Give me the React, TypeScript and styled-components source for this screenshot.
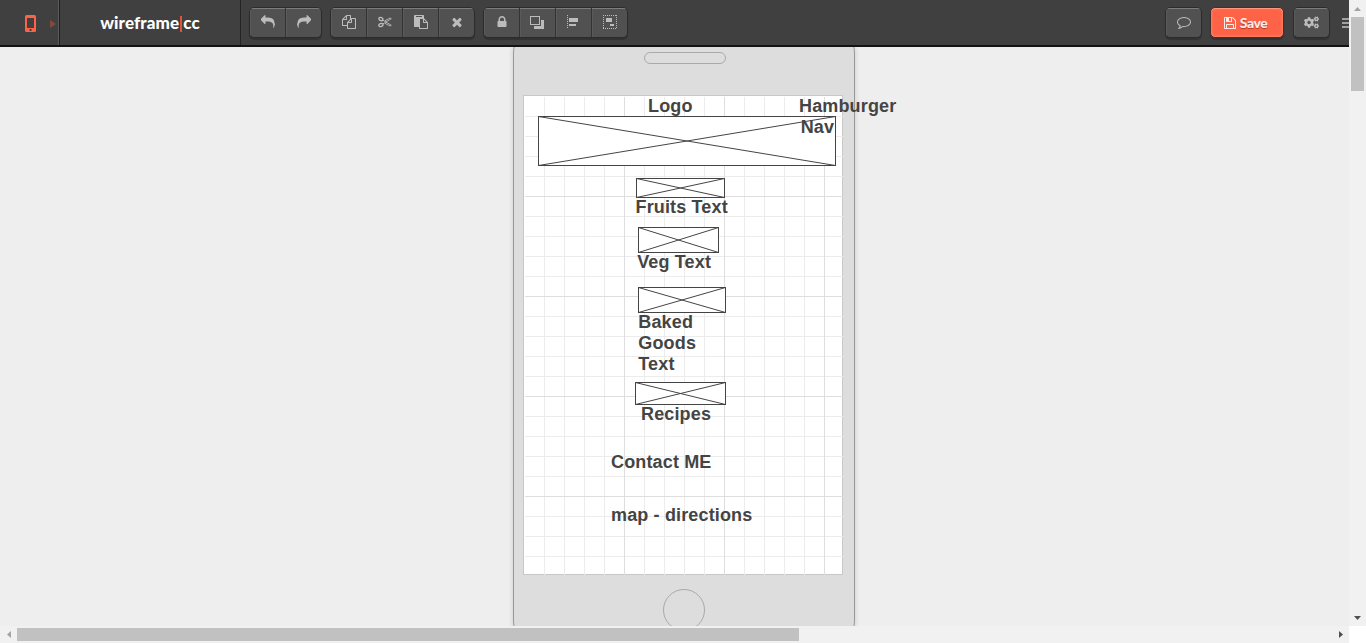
import React from "react";
import styled, { createGlobalStyle, css } from "styled-components";
import { FaCogs } from "react-icons/fa";

const GlobalStyle = createGlobalStyle`
  *, *::before, *::after { box-sizing: border-box; }
  html, body { margin: 0; padding: 0; background: #eee; overflow: hidden; }
  body { font-family: Lato, "Liberation Sans", sans-serif; }
`;

const Window = styled.div`
  display: grid;
  grid-template: 626px 17px / 1349px 17px;
  width: 1366px;
  height: 643px;
  overflow: hidden;
`;

const Page = styled.div`
  display: flex;
  flex-direction: column;
  overflow: hidden;
  background: #eee;
`;

/* ---------- top bar ---------- */

const TopBar = styled.header`
  position: relative;
  z-index: 2;
  display: flex;
  flex: none;
  width: 1349px;
  height: 47px;
  overflow: hidden;
  background: #404040;
  border-bottom: 2px solid #141212;
`;

const DevicePicker = styled.div`
  display: flex;
  align-items: center;
  gap: 14px;
  width: 60px;
  flex: none;
  padding: 2px 0 0 25px;
  border-right: 1px solid #1f1f1f;
  box-shadow: inset -1px 0 #5b5b5b;
`;

const Expand = styled.span`
  border: solid transparent;
  border-width: 4px 0 4px 6px;
  border-left-color: #84483d;
`;

const Brand = styled.div`
  display: flex;
  align-items: center;
  justify-content: center;
  width: 181px;
  flex: none;
  border-right: 1px solid #242424;
  color: #fff;
  font-size: 17px;
  font-weight: 900;
  line-height: 45px;
  letter-spacing: 0.13px;
`;

const BrandBar = styled.span`
  width: 2px;
  height: 16px;
  margin: 3px 1px 0 1px;
  background: #d9553f;
`;

const Tools = styled.div`
  display: flex;
  gap: 8px;
  padding: 7px 0 0 8px;
  flex: none;
`;

const raised = css`
  height: 31px;
  border: 1px solid #2c2c2c;
  border-radius: 5px;
  box-shadow: 0 2px 1px rgba(0, 0, 0, 0.22);
`;

const ButtonGroup = styled.div`
  ${raised}
  display: flex;
  overflow: hidden;
  background: #515151;
`;

const ToolButton = styled.button<{ $nudge?: boolean }>`
  display: flex;
  align-items: center;
  justify-content: center;
  width: 35px;
  height: 29px;
  padding: 0 ${(p) => (p.$nudge ? 1 : 0)}px 1px 0;
  border: 0;
  background: transparent;
  color: #bcbcbc;
  box-shadow: inset 0 1px #7d7d7d, inset 1px 0 #5a5a5a;

  & + & {
    width: 36px;
    border-left: 1px solid #333;
  }
`;

const SideActions = styled.div`
  display: flex;
  align-items: flex-start;
  margin-left: auto;
  padding-top: 7px;
  flex: none;
`;

const SaveButton = styled.button`
  ${raised}
  display: flex;
  align-items: center;
  justify-content: center;
  gap: 3px;
  width: 74px;
  margin: 0 9px 0 8px;
  padding: 0 4px 0 0;
  border-color: #43302c;
  background: #ff6347;
  box-shadow: inset 0 1px #ff9480, inset 0 0 3px #ff9b86, 0 2px 1px rgba(0, 0, 0, 0.22);
  color: #ffe9e4;
  font: 900 14px/20px Lato, sans-serif;
  letter-spacing: -0.5px;
  text-shadow: 0 1px 1px rgba(120, 30, 10, 0.6);
`;

const MenuLines = styled.div`
  display: flex;
  flex-direction: column;
  gap: 2px;
  width: 7px;
  margin: 11px 0 0 12px;
`;

const MenuLine = styled.span`
  height: 2px;
  background: #a2a2a2;
`;

/* ---------- canvas ---------- */

const Workspace = styled.main`
  flex: 1;
  min-height: 0;
  padding-left: 513px;
`;

const Phone = styled.div`
  display: flex;
  flex-direction: column;
  align-items: center;
  width: 342px;
  height: 616px;
  margin-top: -18px;
  padding-top: 22px;
  border: 1px solid #999;
  border-radius: 24px;
  background: #ddd;
  box-shadow: 0 0 5px rgba(0, 0, 0, 0.16);
`;

const Speaker = styled.div`
  width: 82px;
  height: 12px;
  margin-left: 2px;
  border: 1px solid #aaa;
  border-radius: 6px;
  flex: none;
`;

const Screen = styled.div`
  position: relative;
  flex: none;
  width: 320px;
  height: 480px;
  margin: 31px 2px 14px 0;
  border: 1px solid #c8c8c8;
  background: #fff;
`;

const Grid = styled.div`
  height: 478px;
  margin: 1px -1px -1px 1px;
  background-image:
    linear-gradient(to right, transparent 99px, #dedede 99px),
    linear-gradient(to bottom, transparent 99px, #dedede 99px),
    linear-gradient(to right, transparent 19px, #ececec 19px),
    linear-gradient(to bottom, transparent 19px, #ececec 19px);
  background-size: 100px 100px, 100px 100px, 20px 20px, 20px 20px;
`;

const HomeButton = styled.div`
  width: 42px;
  height: 42px;
  flex: none;
  border: 1px solid #aaa;
  border-radius: 50%;
`;

type Box = { x: number; y: number; w: number; h: number };

const Placeholder = styled.svg<{ $x: number; $y: number }>`
  position: absolute;
  left: ${(p) => p.$x}px;
  top: ${(p) => p.$y}px;
  fill: #fff;
  stroke: #444;
`;

const Label = styled.div<{ $x: number; $y: number }>`
  position: absolute;
  left: ${(p) => p.$x}px;
  top: ${(p) => p.$y}px;
  color: #444;
  font: 700 18px/21px "Liberation Sans", Arial, sans-serif;
  letter-spacing: 0.15px;
  white-space: pre;
`;

/* ---------- scrollbars ---------- */

const VerticalBar = styled.div`
  display: flex;
  flex-direction: column;
  align-items: center;
  background: #f1f1f1;
`;

const HorizontalBar = styled.div`
  display: flex;
  align-items: center;
  background: #f1f1f1;
`;

const Thumb = styled.div<{ $w: number; $h: number }>`
  width: ${(p) => p.$w}px;
  height: ${(p) => p.$h}px;
  background: #c1c1c1;
`;

const ArrowCell = styled.div<{ $end?: boolean }>`
  display: flex;
  align-items: center;
  justify-content: center;
  width: 17px;
  height: 17px;
  flex: none;
  ${(p) => p.$end && css`
    &:last-child { margin: auto 0 0 auto; }
  `}
`;

const Corner = styled.div`
  background: #fff;
`;

/* ---------- icons ---------- */

const Glyph = ({ d, flip, size = 14 }: { d: string; flip?: boolean; size?: number }) => (
  <svg width={size} height={size} viewBox="0 0 1792 1792" fill="currentColor">
    <path d={d} transform={flip ? "translate(1792 0) scale(-1 1)" : undefined} />
  </svg>
);

const REPLY =
  "M1792 1120q0 166-127 451-3 7-10.5 24t-13.5 30-13 22q-12 17-28 17-15 0-23.5-10t-8.5-25q0-9 2.5-26.5t2.5-23.5q5-68 5-123 0-112-19.5-200.5t-54-153.5-89-112-117-78-146-46.5-167-22-190-5.5h-224v256q0 26-19 45t-45 19-45-19l-512-512q-19-19-19-45t19-45l512-512q19-19 45-19t45 19 19 45v256h224q713 0 875 403 53 134 53 333z";
const FILES =
  "M1696 384q40 0 68 28t28 68v1216q0 40-28 68t-68 28h-960q-40 0-68-28t-28-68v-288h-544q-40 0-68-28t-28-68v-672q0-40 20-88t48-76l408-408q28-28 76-48t88-20h416q40 0 68 28t28 68v328q68-40 128-40h416zm-544 213l-299 299h299v-299zm-640-384l-299 299h299v-299zm196 647l316-316v-416h-384v416q0 40-28 68t-68 28h-416v640h512v-256q0-40 20-88t48-76zm956 804v-1152h-384v416q0 40-28 68t-68 28h-416v640h896z";
const PASTE =
  "M768 1664h896v-640h-416q-40 0-68-28t-28-68v-416h-384v1152zm256-1440v-64q0-13-9.5-22.5t-22.5-9.5h-704q-13 0-22.5 9.5t-9.5 22.5v64q0 13 9.5 22.5t22.5 9.5h704q13 0 22.5-9.5t9.5-22.5zm256 672h299l-299-299v299zm512 128v672q0 40-28 68t-68 28h-960q-40 0-68-28t-28-68v-160h-544q-40 0-68-28t-28-68v-1344q0-40 28-68t68-28h1088q40 0 68 28t28 68v328q21 13 36 28l408 408q28 28 48 76t20 88z";
const TIMES =
  "M1490 1322q0 40-28 68l-136 136q-28 28-68 28t-68-28l-294-294-294 294q-28 28-68 28t-68-28l-136-136q-28-28-28-68t28-68l294-294-294-294q-28-28-28-68t28-68l136-136q28-28 68-28t68 28l294 294 294-294q28-28 68-28t68 28l136 136q28 28 28 68t-28 68l-294 294 294 294q28 28 28 68z";
const LOCK =
  "M640 768h512v-192q0-106-75-181t-181-75-181 75-75 181v192zm832 96v576q0 40-28 68t-68 28h-960q-40 0-68-28t-28-68v-576q0-40 28-68t68-28h32v-192q0-184 132-316t316-132 316 132 132 316v192h32q40 0 68 28t28 68z";
const COMMENT =
  "M896 384q-204 0-381.5 69.5t-282 187.5-104.5 255q0 112 71.5 213.5t201.5 175.5l87 50-27 96q-24 91-70 172 152-63 275-171l43-38 57 6q69 8 130 8 204 0 381.5-69.5t282-187.5 104.5-255-104.5-255-282-187.5-381.5-69.5zm896 512q0 174-120 321.5t-326 233-450 85.5q-70 0-145-8-198 175-460 242-49 14-114 22h-5q-15 0-27-10.5t-16-27.5v-1q-3-4-.5-12t2-10 4.5-9.5l6-9 7-8.5 8-9q7-8 31-34.5t34.5-38 31-39.5 32.5-51 27-59 26-76q-157-89-247.5-220t-90.5-281q0-174 120-321.5t326-233 450-85.5 450 85.5 326 233 120 321.5z";
const FLOPPY =
  "M512 1536h768v-384h-768v384zm896 0h128v-896q0-14-10-38.5t-20-34.5l-281-281q-10-10-34-20t-39-10v416q0 40-28 68t-68 28h-576q-40 0-68-28t-28-68v-416h-128v1280h128v-416q0-40 28-68t68-28h832q40 0 68 28t28 68v416zm-384-928v-320q0-13-9.5-22.5t-22.5-9.5h-192q-13 0-22.5 9.5t-9.5 22.5v320q0 13 9.5 22.5t22.5 9.5h192q13 0 22.5-9.5t9.5-22.5zm640 32v928q0 40-28 68t-68 28h-1344q-40 0-68-28t-28-68v-1344q0-40 28-68t68-28h928q40 0 88 20t76 48l280 280q28 28 48 76t20 88z";

const PhoneIcon = () => (
  <svg width="11" height="17" viewBox="0 0 11 17">
    <rect width="11" height="17" rx="1.5" fill="#ff6347" />
    <rect x="2" y="3" width="7" height="10" fill="#404040" />
    <rect x="4.5" y="14" width="2" height="2" fill="#404040" />
  </svg>
);

const ScissorsIcon = () => (
  <svg width="14" height="14" viewBox="0 0 14 14" fill="none" stroke="currentColor">
    <ellipse cx="2.9" cy="4" rx="2.1" ry="1.6" strokeWidth="1.3" transform="rotate(25 2.9 4)" />
    <ellipse cx="2.9" cy="10" rx="2.1" ry="1.6" strokeWidth="1.3" transform="rotate(-25 2.9 10)" />
    <path d="M4.8 5.1 8 7l5.3 3.3-1.2.7L7 8.3M4.8 8.9 8 7l5.3-3.3-1.2-.7L7 5.7" strokeWidth="0.9" />
  </svg>
);

const FrontIcon = () => (
  <svg width="14" height="14" viewBox="0 0 14 14" shapeRendering="crispEdges">
    <path d="M11 5h3v9H4v-3h7z" fill="currentColor" />
    <rect x="0.5" y="1.5" width="9" height="8" fill="none" stroke="currentColor" />
  </svg>
);

const AlignIcon = () => (
  <svg width="14" height="14" viewBox="0 0 14 14" fill="currentColor" shapeRendering="crispEdges">
    <path d="M1.5 0v14" stroke="currentColor" strokeDasharray="1 1" />
    <rect x="3" y="3" width="9" height="4" />
    <rect x="3" y="9" width="7" height="2" />
  </svg>
);

const GroupIcon = () => (
  <svg width="14" height="14" viewBox="0 0 14 14" fill="currentColor" shapeRendering="crispEdges">
    <path d="M0 .5h14M0 13.5h14M.5 0v14M13.5 0v14" stroke="currentColor" strokeDasharray="1 1" />
    <rect x="3" y="3" width="6" height="4" />
    <rect x="7" y="9" width="4" height="2" />
  </svg>
);

const ARROWS = {
  up: "M0 4h7L3.5 0z",
  down: "M0 0h7L3.5 4z",
  left: "M4 0v7L0 3.5z",
  right: "M0 0v7l4-3.5z",
};

const ScrollArrow = ({ dir, active }: { dir: keyof typeof ARROWS; active?: boolean }) => {
  const upright = dir === "up" || dir === "down";
  return (
    <ArrowCell $end={active}>
      <svg width={upright ? 7 : 4} height={upright ? 4 : 7} fill={active ? "#505050" : "#a3a3a3"}>
        <path d={ARROWS[dir]} />
      </svg>
    </ArrowCell>
  );
};

/* ---------- wireframe content ---------- */

const boxes: Box[] = [
  { x: 14, y: 20, w: 298, h: 50 },
  { x: 112, y: 82, w: 89, h: 20 },
  { x: 114, y: 131, w: 81, h: 26 },
  { x: 114, y: 191, w: 88, h: 26 },
  { x: 111, y: 286, w: 91, h: 23 },
];

const labels: { text: string; x: number; y: number }[] = [
  { text: "Logo", x: 124, y: 0 },
  { text: "Hamburger", x: 275, y: 0 },
  { text: "Nav", x: 276.7, y: 21 },
  { text: "Fruits Text", x: 111.5, y: 101 },
  { text: "Veg Text", x: 113.2, y: 156 },
  { text: "Baked\nGoods\nText", x: 114.3, y: 216 },
  { text: "Recipes", x: 117, y: 308 },
  { text: "Contact ME", x: 87, y: 356 },
  { text: "map - directions", x: 87, y: 409 },
];

export default function App() {
  return (
    <>
      <GlobalStyle />
      <Window>
        <Page>
          <TopBar>
            <DevicePicker>
              <PhoneIcon />
              <Expand />
            </DevicePicker>
            <Brand>
              wireframe
              <BrandBar />
              cc
            </Brand>
            <Tools>
              <ButtonGroup>
                <ToolButton><Glyph d={REPLY} /></ToolButton>
                <ToolButton><Glyph d={REPLY} flip /></ToolButton>
              </ButtonGroup>
              <ButtonGroup>
                <ToolButton><Glyph d={FILES} /></ToolButton>
                <ToolButton><ScissorsIcon /></ToolButton>
                <ToolButton><Glyph d={PASTE} /></ToolButton>
                <ToolButton><Glyph d={TIMES} /></ToolButton>
              </ButtonGroup>
              <ButtonGroup>
                <ToolButton><Glyph d={LOCK} /></ToolButton>
                <ToolButton $nudge><FrontIcon /></ToolButton>
                <ToolButton $nudge><AlignIcon /></ToolButton>
                <ToolButton><GroupIcon /></ToolButton>
              </ButtonGroup>
            </Tools>
            <SideActions>
              <ButtonGroup>
                <ToolButton><Glyph d={COMMENT} /></ToolButton>
              </ButtonGroup>
              <SaveButton>
                <Glyph d={FLOPPY} />
                Save
              </SaveButton>
              <ButtonGroup>
                <ToolButton><FaCogs size={15} /></ToolButton>
              </ButtonGroup>
              <MenuLines>
                <MenuLine />
                <MenuLine />
                <MenuLine />
              </MenuLines>
            </SideActions>
          </TopBar>
          <Workspace>
            <Phone>
              <Speaker />
              <Screen>
                <Grid />
                {boxes.map((b) => (
                  <Placeholder key={b.y} $x={b.x} $y={b.y} width={b.w} height={b.h}>
                    <rect x={0.5} y={0.5} width={b.w - 1} height={b.h - 1} />
                    <path d={`M.5 .5L${b.w - 0.5} ${b.h - 0.5}M.5 ${b.h - 0.5}L${b.w - 0.5} .5`} />
                  </Placeholder>
                ))}
                {labels.map((l) => (
                  <Label key={l.text} $x={l.x} $y={l.y}>
                    {l.text}
                  </Label>
                ))}
              </Screen>
              <HomeButton />
            </Phone>
          </Workspace>
        </Page>
        <VerticalBar>
          <ScrollArrow dir="up" />
          <Thumb $w={13} $h={74} />
          <ScrollArrow dir="down" active />
        </VerticalBar>
        <HorizontalBar>
          <ScrollArrow dir="left" />
          <Thumb $w={782} $h={13} />
          <ScrollArrow dir="right" active />
        </HorizontalBar>
        <Corner />
      </Window>
    </>
  );
}
